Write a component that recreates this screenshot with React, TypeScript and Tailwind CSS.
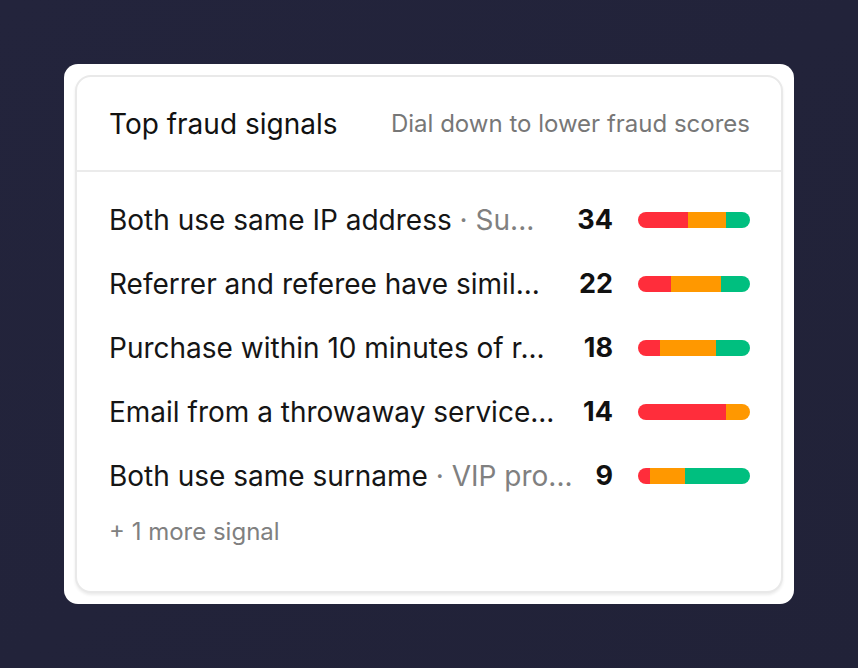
import React from "react";

type Row = { main: string; sub?: string; score: number; seg: [number, number, number] };

const rows: Row[] = [
  { main: "Both use same IP address", sub: "Su...", score: 34, seg: [50, 38, 24] },
  { main: "Referrer and referee have simil...", score: 22, seg: [33, 50, 29] },
  { main: "Purchase within 10 minutes of r...", score: 18, seg: [22, 56, 34] },
  { main: "Email from a throwaway service...", score: 14, seg: [88, 24, 0] },
  { main: "Both use same surname", sub: "VIP pro...", score: 9, seg: [12, 35, 65] },
];

function Bar({ seg }: { seg: [number, number, number] }) {
  return (
    <div className="flex h-[16px] w-[112px] shrink-0 overflow-hidden rounded-full">
      <div className="h-full bg-[#ff2d3b]" style={{ width: seg[0] }} />
      <div className="h-full bg-[#ff9800]" style={{ width: seg[1] }} />
      <div className="h-full bg-[#00bf7f]" style={{ width: seg[2] }} />
    </div>
  );
}

export default function App() {
  return (
    <div
      className="flex min-h-[668px] w-full items-start justify-center bg-gradient-to-br from-[#23243c] to-[#212238] pt-[64px]"
      style={{ fontFamily: "Inter, 'Noto Sans', sans-serif" }}
    >
      <div className="w-[730px] rounded-[14px] bg-white p-[11px]">
        <div className="rounded-[16px] border-2 border-[#e9e9e9] bg-white shadow-[0_2px_3px_rgba(0,0,0,0.08)]">
          <div className="flex h-[95px] items-center justify-between border-b-2 border-[#ebebeb] pl-8 pr-[31px]">
            <div className="text-[28px] text-[#111111]">Top fraud signals</div>
            <div className="text-[24px] text-[#777777]">Dial down to lower fraud scores</div>
          </div>
          <div className="pl-8 pr-[31px] pt-[16px] pb-[35px]">
            {rows.map((r, i) => (
              <div key={i} className="flex h-[64px] items-center">
                <div className="min-w-0 flex-1 whitespace-nowrap text-[28px] text-[#151515]">
                  {r.main}
                  {r.sub && <span className="text-[#808080]"> · {r.sub}</span>}
                </div>
                <div className="w-[42px] shrink-0 text-right text-[27px] font-bold text-[#111111]">
                  {r.score}
                </div>
                <div className="ml-[25px]">
                  <Bar seg={r.seg} />
                </div>
              </div>
            ))}
            <div className="flex h-[48px] items-center text-[24px] text-[#808080]">+ 1 more signal</div>
          </div>
        </div>
      </div>
    </div>
  );
}
